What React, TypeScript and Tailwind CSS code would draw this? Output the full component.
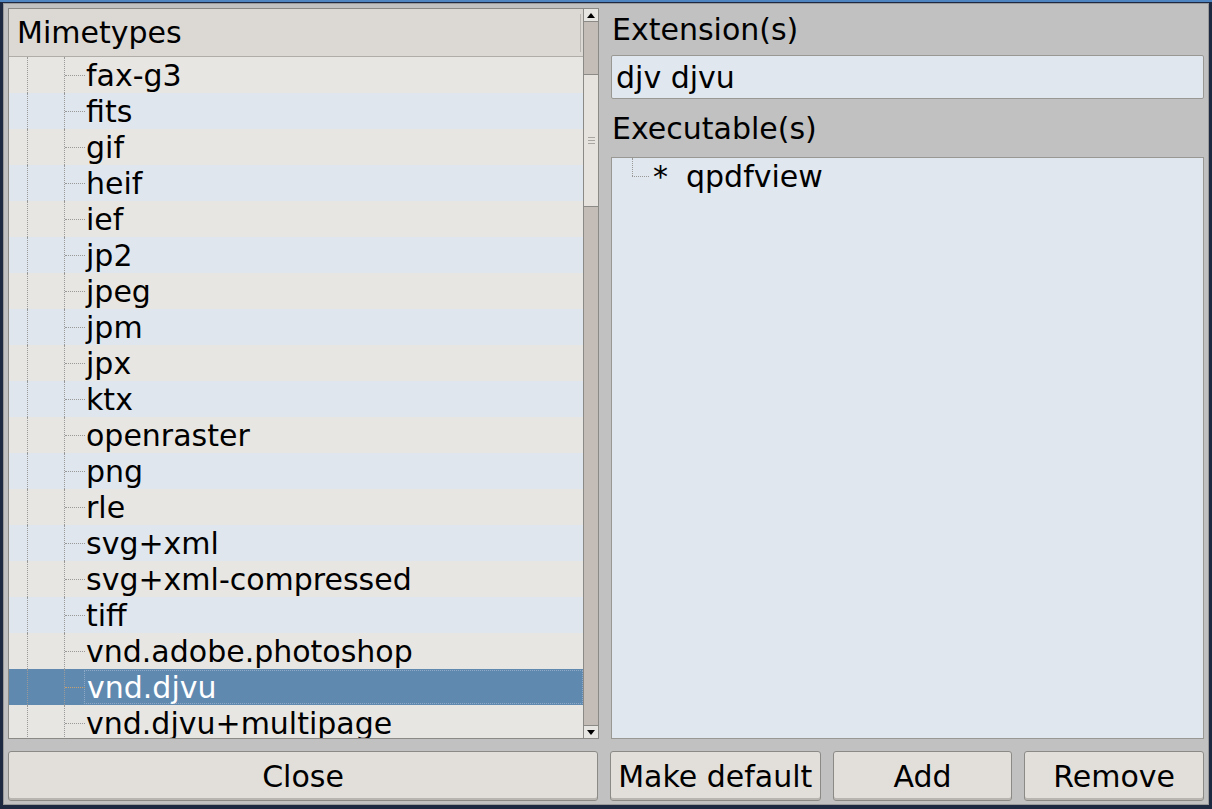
const items = [
  "fax-g3",
  "fits",
  "gif",
  "heif",
  "ief",
  "jp2",
  "jpeg",
  "jpm",
  "jpx",
  "ktx",
  "openraster",
  "png",
  "rle",
  "svg+xml",
  "svg+xml-compressed",
  "tiff",
  "vnd.adobe.photoshop",
  "vnd.djvu",
  "vnd.djvu+multipage",
];

const font = { fontFamily: '"DejaVu Sans", sans-serif' };

function Row({ label, index, selected }: { label: string; index: number; selected: boolean }) {
  const bg = selected ? "bg-[#6089b0] text-white" : index % 2 === 0 ? "bg-[#e8e6e2] text-black" : "bg-[#dfe6ee] text-black";
  return (
    <div className={`relative flex h-[36px] shrink-0 items-center ${bg}`}>
      <div className="absolute left-[18px] top-0 h-full border-l border-dotted border-[#999]" />
      <div className="absolute left-[55px] top-0 h-full border-l border-dotted border-[#999]" />
      <div
        className={`absolute left-[56px] top-1/2 w-[20px] border-t border-dotted ${selected ? "border-[#c8a070]" : "border-[#999]"}`}
      />
      <span
        className={`ml-[75px] flex h-[34px] flex-1 items-center pl-[2px] ${selected ? "border border-dotted border-[#8fa9c6]" : ""}`}
      >
        {label}
      </span>
    </div>
  );
}

function Button({ label, className }: { label: string; className: string }) {
  return (
    <button
      className={`flex h-[50px] items-center justify-center rounded-[3px] border border-[#8c8a86] bg-[#e2dfdb] text-[30px] text-black shadow-[inset_0_-2px_0_#b8b5b0] ${className}`}
    >
      {label}
    </button>
  );
}

export default function App() {
  return (
    <div className="h-[809px] w-[1212px] overflow-hidden bg-[#1c2940]" style={font}>
      <div className="h-[2px] bg-[#4f86c2]" />
      <div className="ml-[3px] mt-[1px] flex h-[802px] w-[1206px] flex-col border border-[#9a9a9a] bg-[#c1c1c1] px-[4px] pt-[4px]">
        <div className="flex h-[731px] gap-[12px]">
          {/* left tree */}
          <div className="flex w-[591px] border border-[#8c8a86] bg-[#e8e6e2]">
            <div className="flex flex-1 flex-col overflow-hidden">
              <div className="flex h-[48px] shrink-0 items-center border-b border-[#b0ada8] bg-[#dcd8d4] pl-[8px] text-[30px]">
                <span>Mimetypes</span>
                <div className="ml-auto mr-[2px] h-[38px] border-r border-[#b8b5b0]" />
              </div>
              <div className="flex flex-col text-[30px]">
                {items.map((it, i) => (
                  <Row key={it} label={it} index={i} selected={it === "vnd.djvu"} />
                ))}
              </div>
            </div>
            {/* scrollbar */}
            <div className="flex w-[15px] flex-col border-l border-[#8c8a86] bg-[#c4bcb6]">
              <div className="flex h-[13px] items-center justify-center border-b border-[#8c8a86] bg-[#e8e6e2]">
                <svg width="8" height="5" viewBox="0 0 8 5">
                  <path d="M0 5 L4 0 L8 5 Z" fill="#000" />
                </svg>
              </div>
              <div className="h-[52px]" />
              <div className="flex h-[133px] flex-col items-center justify-center gap-[2px] border-y border-[#8c8a86] bg-[#e6e3df]">
                <div className="h-px w-[7px] bg-[#a8a5a0]" />
                <div className="h-px w-[7px] bg-[#a8a5a0]" />
                <div className="h-px w-[7px] bg-[#a8a5a0]" />
              </div>
              <div className="flex-1" />
              <div className="flex h-[13px] items-center justify-center border-t border-[#8c8a86] bg-[#e8e6e2]">
                <svg width="8" height="5" viewBox="0 0 8 5">
                  <path d="M0 0 L4 5 L8 0 Z" fill="#000" />
                </svg>
              </div>
            </div>
          </div>

          {/* right side */}
          <div className="flex flex-1 flex-col">
            <div className="flex h-[42px] items-center pl-[1px] text-[30px] text-black">Extension(s)</div>
            <div className="mt-[5px] flex h-[44px] items-center rounded-[2px] border border-[#9a9893] bg-[#e0e7ef] pl-[4px] text-[30px] text-black">
              djv djvu
            </div>
            <div className="flex h-[58px] items-center pl-[1px] text-[30px] text-black">Executable(s)</div>
            <div className="flex-1 border border-[#9a9893] bg-[#e0e7ef] text-[30px]">
              <div className="relative flex h-[36px] items-center">
                <div className="absolute left-[20px] top-0 h-[18px] border-l border-dotted border-[#999]" />
                <div className="absolute left-[20px] top-[18px] w-[17px] border-t border-dotted border-[#999]" />
                <span className="ml-[41px]">*</span>
                <span className="ml-[18px]">qpdfview</span>
              </div>
            </div>
          </div>
        </div>

        <div className="mt-[12px] flex gap-[12px]">
          <Button label="Close" className="w-[591px]" />
          <Button label="Make default" className="w-[211px]" />
          <Button label="Add" className="w-[180px]" />
          <Button label="Remove" className="w-[180px]" />
        </div>
      </div>
    </div>
  );
}
